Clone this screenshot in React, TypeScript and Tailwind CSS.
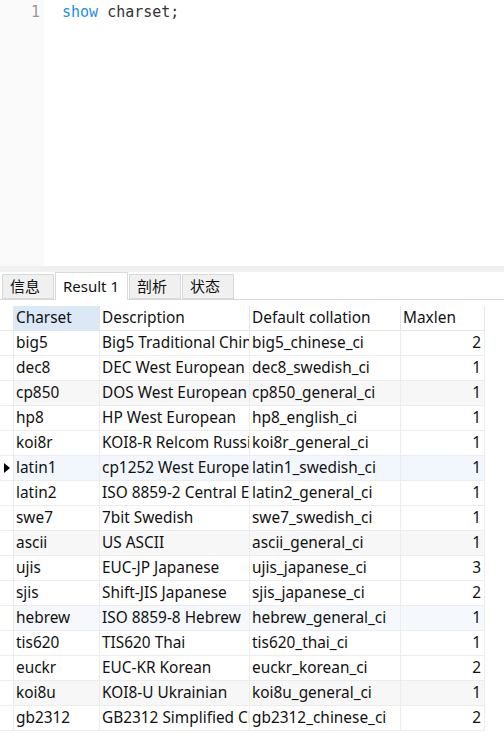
import React from 'react';

const rows: [string, string, string, number][] = [
  ['big5', 'Big5 Traditional Chinese', 'big5_chinese_ci', 2],
  ['dec8', 'DEC West European', 'dec8_swedish_ci', 1],
  ['cp850', 'DOS West European', 'cp850_general_ci', 1],
  ['hp8', 'HP West European', 'hp8_english_ci', 1],
  ['koi8r', 'KOI8-R Relcom Russian', 'koi8r_general_ci', 1],
  ['latin1', 'cp1252 West European', 'latin1_swedish_ci', 1],
  ['latin2', 'ISO 8859-2 Central European', 'latin2_general_ci', 1],
  ['swe7', '7bit Swedish', 'swe7_swedish_ci', 1],
  ['ascii', 'US ASCII', 'ascii_general_ci', 1],
  ['ujis', 'EUC-JP Japanese', 'ujis_japanese_ci', 3],
  ['sjis', 'Shift-JIS Japanese', 'sjis_japanese_ci', 2],
  ['hebrew', 'ISO 8859-8 Hebrew', 'hebrew_general_ci', 1],
  ['tis620', 'TIS620 Thai', 'tis620_thai_ci', 1],
  ['euckr', 'EUC-KR Korean', 'euckr_korean_ci', 2],
  ['koi8u', 'KOI8-U Ukrainian', 'koi8u_general_ci', 1],
  ['gb2312', 'GB2312 Simplified Chinese', 'gb2312_chinese_ci', 2],
];

const ui = { fontFamily: '"Noto Sans", "Noto Sans CJK SC", sans-serif' };
const mono = { fontFamily: '"DejaVu Sans Mono", monospace' };

function rowBg(i: number) {
  if (i === 5) return 'bg-[#f2f7fd]';
  if (i === 11) return 'bg-[#f5f8fc]';
  if (i % 3 === 2) return 'bg-[#f7f7f7]';
  return 'bg-white';
}

function Tab({ label, active }: { label: string; active?: boolean }) {
  if (active) {
    return (
      <div className="-mb-px flex h-[28px] items-center border border-b-0 border-[#d9d9d9] bg-white px-[7px] text-[15px] text-[#111]">
        {label}
      </div>
    );
  }
  return (
    <div className="flex h-[25px] items-center border border-[#d9d9d9] bg-[#f0f0f0] px-[7px] text-[15px] text-[#111]">
      {label}
    </div>
  );
}

export default function App() {
  return (
    <div className="h-[733px] w-[504px] overflow-hidden bg-white" style={ui}>
      <div className="flex h-[266px]">
        <div className="w-[44px] bg-[#fafafa] pr-[4px] pt-[1px] text-right text-[15px] leading-[22px] text-[#999]" style={mono}>
          1
        </div>
        <div className="pl-[18px] pt-[1px] text-[15px] leading-[22px] text-[#333]" style={mono}>
          <span className="text-[#1e8ee8]">show</span> charset;
        </div>
      </div>
      <div className="h-[6px] bg-[#f0f0f0]" />

      <div className="flex h-[28px] items-end gap-[1px] border-b border-[#d9d9d9] pl-[2px]">
        <div className="w-[52px]"><Tab label="信息" /></div>
        <div className="w-[73px]"><Tab label="Result 1" active /></div>
        <div className="w-[52px]"><Tab label="剖析" /></div>
        <div className="w-[52px]"><Tab label="状态" /></div>
      </div>

      <div className="pt-[6px] text-[15.4px] text-[#111]">
        <div className="flex h-[25px]">
          <div className="w-[13px] border-b border-[#e5e5e5]" />
          <div className="w-[87px] border-x border-b border-[#e5e5e5] bg-[#dbe9f7] pl-[2px] leading-[24px]">Charset</div>
          <div className="w-[150px] border-r border-b border-[#e5e5e5] pl-[2px] leading-[24px]">Description</div>
          <div className="w-[151px] border-r border-b border-[#e5e5e5] pl-[2px] leading-[24px]">Default collation</div>
          <div className="w-[84px] border-r border-b border-[#e5e5e5] pl-[2px] leading-[24px]">Maxlen</div>
        </div>
        {rows.map((r, i) => (
          <div key={r[0]} className="flex h-[25px]">
            <div className="relative w-[13px] border-b border-[#ececec]">
              {i === 5 && (
                <svg className="absolute left-[4px] top-[7px]" width="6" height="10" viewBox="0 0 6 10">
                  <path d="M0 0 L6 5 L0 10 Z" fill="#000" />
                </svg>
              )}
            </div>
            <div className={`flex w-[472px] ${rowBg(i)}`}>
              <div className="w-[87px] overflow-hidden whitespace-nowrap border-x border-b border-[#ececec] pl-[2px] leading-[24px]">{r[0]}</div>
              <div className="w-[150px] overflow-hidden whitespace-nowrap border-r border-b border-[#ececec] pl-[2px] leading-[24px]">{r[1]}</div>
              <div className="w-[151px] overflow-hidden whitespace-nowrap border-r border-b border-[#ececec] pl-[2px] leading-[24px]">{r[2]}</div>
              <div className="w-[84px] border-r border-b border-[#ececec] pr-[3px] text-right leading-[24px]">{r[3]}</div>
            </div>
          </div>
        ))}
      </div>
    </div>
  );
}
